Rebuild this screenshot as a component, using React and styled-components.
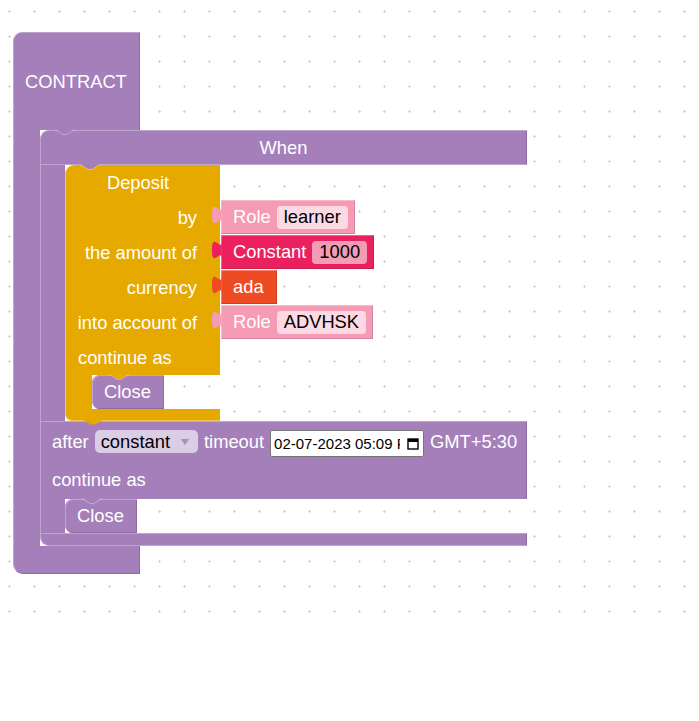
import React from "react";
import styled, { createGlobalStyle } from "styled-components";

const PURPLE = "#a57fba";
const PURPLE_LIGHT = "#bea5ce";
const PURPLE_DARK = "#8e6ea0";
const YELLOW = "#e6a900";
const YELLOW_LIGHT = "#f0c955";
const PINK = "#f59bb5";
const PINK_FIELD = "#fcd9e3";
const CRIMSON = "#ea215e";
const CRIMSON_FIELD = "#f49bb5";
const ORANGE = "#ee4b24";

const GlobalStyle = createGlobalStyle`
  html, body {
    margin: 0;
    background: #fff;
  }
  body {
    font-family: "Liberation Sans", Arial, sans-serif;
  }
`;

const Workspace = styled.div`
  position: relative;
  width: 699px;
  height: 620px;
  overflow: hidden;
`;

const GridSvg = styled.svg`
  position: absolute;
  left: 0;
  top: 0;
`;

// where the root block sits on the canvas
const BlockPlace = styled.div`
  position: absolute;
  left: 13px;
  top: 32px;
  color: #fff;
  font-size: 18.33px;
`;

/* ---------- CONTRACT ---------- */

const ContractBlock = styled.div`
  display: flex;
  flex-direction: column;
  align-items: flex-start;
`;

const ContractHead = styled.div`
  box-sizing: border-box;
  width: 127px;
  height: 98px;
  display: flex;
  align-items: center;
  padding-left: 11px;
  background: ${PURPLE};
  border-radius: 9px 0 0 0;
  border-top: 1px solid ${PURPLE_LIGHT};
  border-left: 1px solid ${PURPLE_LIGHT};
  border-right: 1px solid ${PURPLE_DARK};
`;

const ContractMiddle = styled.div`
  display: flex;
`;

const Spine = styled.div`
  box-sizing: border-box;
  width: ${(p) => p.$width}px;
  background: ${(p) => p.$bg};
  border-left: ${(p) => (p.$edge ? `1px solid ${p.$edge}` : "none")};
`;

const ContractFoot = styled.div`
  box-sizing: border-box;
  width: 127px;
  height: 28px;
  background: ${PURPLE};
  border-radius: 0 0 0 10px;
  border-left: 1px solid ${PURPLE_LIGHT};
  border-right: 1px solid ${PURPLE_DARK};
  border-bottom: 1px solid ${PURPLE_DARK};
`;

/* ---------- When ---------- */

const WhenBlock = styled.div`
  position: relative;
  width: 487px;
  display: flex;
  flex-direction: column;
`;

const WhenTop = styled.div`
  box-sizing: border-box;
  height: 35px;
  display: flex;
  align-items: center;
  justify-content: center;
  background: ${PURPLE};
  border-radius: 9px 0 0 0;
  border-top: 1px solid ${PURPLE_LIGHT};
  border-left: 1px solid ${PURPLE_LIGHT};
  border-right: 1px solid ${PURPLE_DARK};
  border-bottom: 1px solid ${PURPLE_LIGHT};
`;

const StatementRow = styled.div`
  display: flex;
  align-items: stretch;
`;

const WhenRow = styled.div`
  box-sizing: border-box;
  height: ${(p) => p.$height}px;
  display: flex;
  align-items: center;
  gap: 6px;
  padding-left: 11px;
  background: ${PURPLE};
  border-left: 1px solid ${PURPLE_LIGHT};
  border-right: 1px solid ${PURPLE_DARK};
  border-top: ${(p) => (p.$topEdge ? `1px solid ${PURPLE_LIGHT}` : "none")};
`;

const WhenBottom = styled.div`
  box-sizing: border-box;
  height: 13px;
  background: ${PURPLE};
  border-radius: 0 0 0 9px;
  border-top: 1px solid ${PURPLE_LIGHT};
  border-left: 1px solid ${PURPLE_LIGHT};
  border-right: 1px solid ${PURPLE_DARK};
  border-bottom: 1px solid ${PURPLE_LIGHT};
`;

const Dropdown = styled.div`
  height: 23px;
  display: flex;
  align-items: center;
  gap: 11px;
  padding: 0 9px 0 6px;
  border-radius: 5px;
  background: #dccde6;
  color: #000;
`;

const Arrow = styled.span`
  width: 0;
  height: 0;
  border-left: 4px solid transparent;
  border-right: 4px solid transparent;
  border-top: 6px solid #a58fbb;
  margin-top: 1px;
`;

const DateBox = styled.div`
  box-sizing: border-box;
  width: 154px;
  height: 27px;
  margin-top: 4px;
  display: flex;
  align-items: center;
  padding: 0 4px 0 3px;
  background: #fff;
  border: 1px solid #767676;
  border-radius: 2px;
  color: #000;
  font-size: 15px;
`;

const DateText = styled.span`
  width: 126px;
  overflow: hidden;
  white-space: nowrap;
`;

const CalendarSvg = styled.svg`
  margin-left: auto;
`;

/* ---------- Deposit ---------- */

const DepositBlock = styled.div`
  position: relative;
  display: flex;
  flex-direction: column;
  align-items: flex-start;
`;

const DepositRow = styled.div`
  display: flex;
  height: 35px;
`;

const DepositCell = styled.div`
  box-sizing: border-box;
  width: 155px;
  display: flex;
  align-items: center;
  justify-content: ${(p) => p.$justify || "flex-end"};
  padding: ${(p) => p.$pad || "0 23px 0 0"};
  background: ${YELLOW};
  border-left: 1px solid ${YELLOW_LIGHT};
  border-radius: ${(p) => (p.$first ? "9px 0 0 0" : "0")};
`;

const DepositFoot = styled.div`
  position: relative;
  box-sizing: border-box;
  width: 155px;
  height: 12px;
  background: ${YELLOW};
  border-radius: 0 0 0 7px;
  border-left: 1px solid ${YELLOW_LIGHT};
  border-bottom: 1px solid ${YELLOW_LIGHT};
`;

/* ---------- small blocks ---------- */

const ValueBlock = styled.div`
  position: relative;
  box-sizing: border-box;
  height: 34px;
  margin-left: 1px;
  display: flex;
  align-items: center;
  gap: 6px;
  padding: 0 ${(p) => p.$padRight}px 0 12px;
  background: ${(p) => p.$bg};
  box-shadow: inset -1px -1px 0 rgba(0, 0, 0, 0.14),
    inset 1px 1px 0 rgba(255, 255, 255, 0.3);
`;

const Field = styled.span`
  height: 23px;
  display: flex;
  align-items: center;
  padding: 0 7px;
  border-radius: 4px;
  background: ${(p) => p.$bg};
  color: #000;
`;

const CloseBlock = styled.div`
  position: relative;
  box-sizing: border-box;
  height: 34px;
  display: flex;
  align-items: center;
  padding: 0 13px 0 12px;
  background: ${PURPLE};
  border-radius: 8px 0 0 8px;
  box-shadow: inset 1px 1px 0 ${PURPLE_LIGHT}, inset -1px -1px 0 ${PURPLE_DARK};
`;

const ConnectorSvg = styled.svg`
  position: absolute;
  overflow: visible;
  left: ${(p) => p.$left}px;
  top: ${(p) => p.$top};
`;

const Notch = ({ fill, left = 15 }) => (
  <ConnectorSvg $left={left} $top="-1px" width="20" height="6" viewBox="0 0 20 6">
    <polygon points="0,0 8,5 12,5 20,0" fill={fill} />
    <polyline
      points="0,0.5 8,5.5 12,5.5 20,0.5"
      fill="none"
      stroke="rgba(255,255,255,0.3)"
      strokeWidth="1"
    />
  </ConnectorSvg>
);

const BottomTab = ({ fill }) => (
  <ConnectorSvg $left={17} $top="100%" width="20" height="5" viewBox="0 0 20 5">
    <polygon points="0,0 20,0 12,4.5 8,4.5" fill={fill} />
  </ConnectorSvg>
);

const Tab = ({ fill }) => (
  <ConnectorSvg $left={-10} $top="6px" width="11" height="18" viewBox="0 0 11 18">
    <path d="M10.6 0 c0 12 -9.6 -10.2 -9.6 9 s9.6 -3 9.6 9 Z" fill={fill} />
  </ConnectorSvg>
);

const Value = ({ bg, label, field, fieldBg }) => (
  <ValueBlock $bg={bg} $padRight={field ? 7 : 13}>
    <Tab fill={bg} />
    <span>{label}</span>
    {field && <Field $bg={fieldBg}>{field}</Field>}
  </ValueBlock>
);

const Close = ({ parent }) => (
  <CloseBlock>
    <Notch fill={parent} left={17} />
    Close
  </CloseBlock>
);

const Calendar = () => (
  <CalendarSvg width="12" height="12" viewBox="0 0 12 12">
    <rect x="1" y="1" width="10" height="10" fill="none" stroke="#000" strokeWidth="1.4" />
    <rect x="1" y="1" width="10" height="3" fill="#000" />
  </CalendarSvg>
);

const depositInputs = [
  { label: "by", value: { bg: PINK, label: "Role", field: "learner", fieldBg: PINK_FIELD } },
  {
    label: "the amount of",
    value: { bg: CRIMSON, label: "Constant", field: "1000", fieldBg: CRIMSON_FIELD },
  },
  { label: "currency", value: { bg: ORANGE, label: "ada" } },
  {
    label: "into account of",
    value: { bg: PINK, label: "Role", field: "ADVHSK", fieldBg: PINK_FIELD },
  },
];

const Deposit = () => (
  <DepositBlock>
    <Notch fill={PURPLE} />
    <DepositRow>
      <DepositCell $first $justify="center" $pad="0 10px 0 0">
        Deposit
      </DepositCell>
    </DepositRow>
    {depositInputs.map((inp, i) => (
      <DepositRow key={i}>
        <DepositCell>{inp.label}</DepositCell>
        <Value {...inp.value} />
      </DepositRow>
    ))}
    <DepositRow>
      <DepositCell $justify="flex-start" $pad="0 0 0 12px">
        continue as
      </DepositCell>
    </DepositRow>
    <StatementRow>
      <Spine $width={27} $bg={YELLOW} $edge={YELLOW_LIGHT} />
      <Close parent={YELLOW} />
    </StatementRow>
    <DepositFoot>
      <BottomTab fill={YELLOW} />
    </DepositFoot>
  </DepositBlock>
);

const When = () => (
  <WhenBlock>
    <Notch fill={PURPLE} />
    <WhenTop>When</WhenTop>
    <StatementRow>
      <Spine $width={25} $bg={PURPLE} $edge={PURPLE_LIGHT} />
      <Deposit />
    </StatementRow>
    <WhenRow $height={40} $topEdge>
      <span>after</span>
      <Dropdown>
        constant
        <Arrow />
      </Dropdown>
      <span>timeout</span>
      <DateBox>
        <DateText>02-07-2023 05:09 PM</DateText>
        <Calendar />
      </DateBox>
      <span>GMT+5:30</span>
    </WhenRow>
    <WhenRow $height={38}>continue as</WhenRow>
    <StatementRow>
      <Spine $width={25} $bg={PURPLE} $edge={PURPLE_LIGHT} />
      <Close parent={PURPLE} />
    </StatementRow>
    <WhenBottom />
  </WhenBlock>
);

const Grid = () => (
  <GridSvg width="699" height="620">
    <defs>
      <pattern id="grid-dots" width="25" height="25" patternUnits="userSpaceOnUse">
        <path d="M8 11.5h3M9.5 10v3" stroke="#d4d4d4" strokeWidth="1" />
      </pattern>
    </defs>
    <rect width="699" height="620" fill="url(#grid-dots)" />
  </GridSvg>
);

const App = () => (
  <>
    <GlobalStyle />
    <Workspace>
      <Grid />
      <BlockPlace>
        <ContractBlock>
          <ContractHead>CONTRACT</ContractHead>
          <ContractMiddle>
            <Spine $width={27} $bg={PURPLE} $edge={PURPLE_LIGHT} />
            <When />
          </ContractMiddle>
          <ContractFoot />
        </ContractBlock>
      </BlockPlace>
    </Workspace>
  </>
);

export default App;
